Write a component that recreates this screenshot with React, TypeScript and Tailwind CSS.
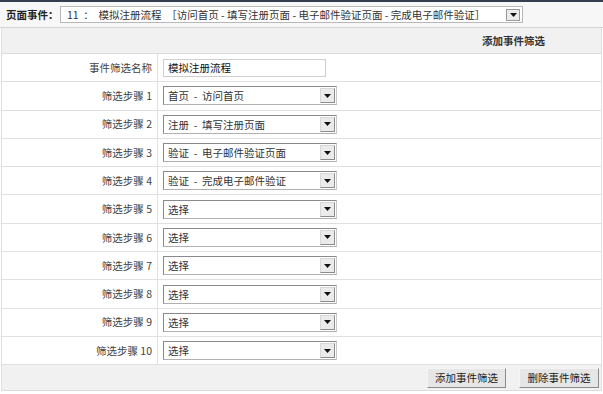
import React from "react";

function Arrow({ className }: { className: string }) {
  return (
    <span className={className}>
      <svg width="7" height="4" viewBox="0 0 7 4">
        <path d="M0 0 L7 0 L3.5 4 Z" fill="#111" />
      </svg>
    </span>
  );
}

function Select({ text }: { text: string }) {
  return (
    <div className="flex items-center w-[174px] h-[19px] border border-t-[#8a8a8a] border-l-[#8a8a8a] border-r-[#c8c8c8] border-b-[#b0b0b0] bg-white pl-[4px] pr-[1px]">
      <span className="flex-1 whitespace-pre text-[#333] leading-[15px]">{text}</span>
      <Arrow className="flex items-center justify-center w-[15px] h-[15px] bg-[#ebebeb] border border-t-[#d8d8d8] border-l-[#d8d8d8] border-r-[#8c8c8c] border-b-[#8c8c8c]" />
    </div>
  );
}

const steps = [
  "首页  -  访问首页",
  "注册  -  填写注册页面",
  "验证  -  电子邮件验证页面",
  "验证  -  完成电子邮件验证",
  "选择",
  "选择",
  "选择",
  "选择",
  "选择",
  "选择",
];

function Row({ label, children }: { label: string; children: React.ReactNode }) {
  return (
    <div className="flex h-[28.3px] border-b border-[#e0e0e0]">
      <div className="w-[156px] shrink-0 flex items-center justify-end pr-[5px] border-r border-[#e0e0e0] text-[#444]">
        {label}
      </div>
      <div className="flex items-center pl-[5px]">{children}</div>
    </div>
  );
}

export default function App() {
  return (
    <div
      className="w-[603px] h-[394px] bg-white text-[10.5px] text-[#333] overflow-hidden"
      style={{ fontFamily: '"Noto Sans CJK SC", "Liberation Sans", sans-serif' }}
    >
      <div className="h-[28px] border-t-[2px] border-t-[#34404f] border-b border-b-[#d4d4d4] bg-[#f7f7f7] flex items-center pl-[6px]">
        <span className="font-bold text-[#222] w-[54px]">页面事件：</span>
        <div className="flex items-center w-[463px] h-[17px] border border-[#b8b8b8] bg-white pl-[6px] pr-[2px]">
          <span className="flex-1 text-[#333] leading-[14px] whitespace-pre">
            11  ：  模拟注册流程  ［访问首页 - 填写注册页面 - 电子邮件验证页面 - 完成电子邮件验证］
          </span>
          <Arrow className="flex items-center justify-center w-[14px] h-[12px] bg-[#ebebeb] border border-[#9a9a9a]" />
        </div>
      </div>
      <div className="ml-[1px] w-[601px] border-x border-[#e0e0e0]">
        <div className="h-[26px] bg-[#f1f1f1] border-b border-[#dcdcdc] flex items-center justify-end pr-[56px] font-bold text-[#333]">
          添加事件筛选
        </div>
        <Row label="事件筛选名称">
          <div className="flex items-center w-[163px] h-[18px] border border-[#cfcfcf] bg-white pl-[4px] text-[#111]">
            模拟注册流程
          </div>
        </Row>
        {steps.map((s, i) => (
          <Row key={i} label={`筛选步骤 ${i + 1}`}>
            <Select text={s} />
          </Row>
        ))}
        <div className="h-[26px] bg-[#f1f1f1] border-b border-[#dcdcdc] flex items-center justify-end pr-[2px] gap-[13px]">
          <button className="w-[79px] h-[20px] bg-[#e6e6e6] border border-t-[#f4f4f4] border-l-[#f4f4f4] border-r-[#8a8a8a] border-b-[#8a8a8a] text-[#222] leading-none">
            添加事件筛选
          </button>
          <button className="w-[80px] h-[20px] bg-[#e6e6e6] border border-t-[#f4f4f4] border-l-[#f4f4f4] border-r-[#8a8a8a] border-b-[#8a8a8a] text-[#222] leading-none">
            删除事件筛选
          </button>
        </div>
      </div>
    </div>
  );
}
